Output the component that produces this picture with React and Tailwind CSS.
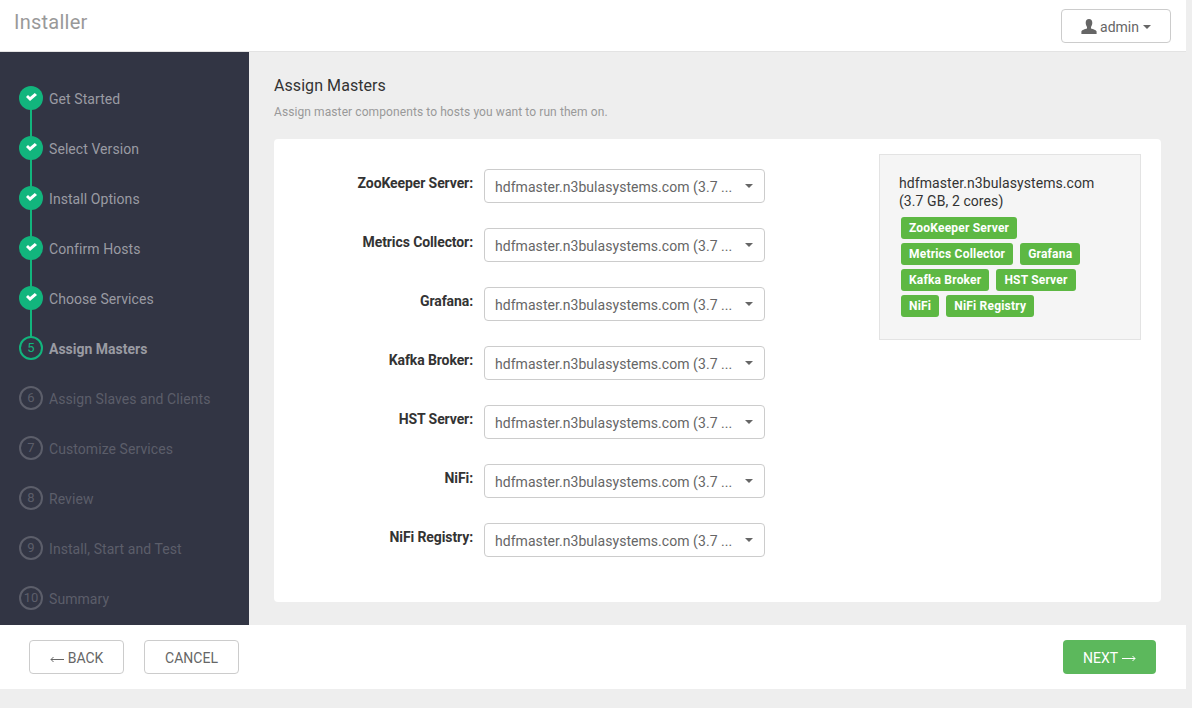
import React from "react";

const steps = [
  "Get Started",
  "Select Version",
  "Install Options",
  "Confirm Hosts",
  "Choose Services",
  "Assign Masters",
  "Assign Slaves and Clients",
  "Customize Services",
  "Review",
  "Install, Start and Test",
  "Summary",
];

const masters = ["ZooKeeper Server", "Metrics Collector", "Grafana", "Kafka Broker", "HST Server", "NiFi", "NiFi Registry"];

const hostRows = [
  ["ZooKeeper Server"],
  ["Metrics Collector", "Grafana"],
  ["Kafka Broker", "HST Server"],
  ["NiFi", "NiFi Registry"],
];

const CURRENT = 5;

function Check() {
  return (
    <svg width="11" height="8" viewBox="0 0 11 8" className="mb-[2px]">
      <path d="M0 4 2 2 4 4 8.800 0 11 2 4 8z" fill="white" />
    </svg>
  );
}

function Arrow({ left, className }) {
  return (
    <svg width="14" height="7" viewBox="0 0 14 7" fill="none" stroke="currentColor" className={className}>
      {left ? <path d="M14 3.500H1M3.500 1 1 3.500 3.500 6" /> : <path d="M0 3.500h13M10.500 1 13 3.500 10.500 6" />}
    </svg>
  );
}

function Step({ index, label }) {
  const done = index < CURRENT;
  const current = index === CURRENT;
  return (
    <li className="relative flex h-[50px] items-start">
      {index < CURRENT && <span className="absolute left-[11px] top-[20px] h-[34px] w-[2px] bg-[#12b57d]" />}
      {done ? (
        <span className="relative flex h-6 w-6 shrink-0 items-center justify-center rounded-full bg-[#12b57d]">
          <Check />
        </span>
      ) : (
        <span
          className={
            current
              ? "relative flex h-6 w-6 shrink-0 items-center justify-center rounded-full border-2 border-[#12b57d] bg-[#323544] text-[13px] text-[#12b57d]"
              : "relative flex h-6 w-6 shrink-0 items-center justify-center rounded-full border-2 border-[#5c5e6a] text-[13px] text-[#5c5e6a]"
          }
        >
          {index}
        </span>
      )}
      <span
        className={
          current
            ? "mt-px ml-[6px] text-sm leading-6 font-bold text-[#9a9ba3]"
            : done
              ? "mt-px ml-[6px] text-sm leading-6 tracking-[0.07px] text-[#9a9ba3]"
              : "mt-px ml-[6px] text-sm leading-6 tracking-[0.07px] text-[#5c5e6a]"
        }
      >
        {label}
      </span>
    </li>
  );
}

function MasterRow({ label }) {
  return (
    <div className="flex h-[59px] items-start">
      <label className="mt-[4px] w-[199px] text-right text-sm leading-5 font-bold tracking-[-0.1px] text-[#333]">{label}:</label>
      <div className="ml-[11px] flex h-[34px] w-[281px] items-center justify-between rounded border border-[#ccc] bg-white pr-[11px] pl-[10px] text-sm text-[#666]">
        <span className="mt-[2px] tracking-[0.05px]">hdfmaster.n3bulasystems.com (3.7 ...</span>
        <span className="h-0 w-0 border-x-4 border-t-4 border-x-transparent border-t-[#666]" />
      </div>
    </div>
  );
}

export default function App() {
  return (
    <div className="h-[708px] w-[1192px] overflow-hidden bg-[#eeeeee] font-['Roboto',sans-serif] text-sm">
      <div className="w-[1186px]">
        <header className="flex h-[52px] items-start justify-between border-b border-[#e3e3e3] bg-white pr-[15px] pl-[14px]">
          <h1 className="mt-[9px] text-xl leading-[26px] tracking-[0.25px] text-[#999]">Installer</h1>
          <button className="mt-[9px] flex h-[34px] w-[110px] items-center justify-center rounded border border-[#ccc] bg-white text-sm text-[#666]">
            <svg width="16" height="15" viewBox="0 0 16 15" className="mr-[3px]" fill="#666">
              <path d="M8 0c2.200 0 3.300 1.600 3.300 3.800 0 1.700-.6 3.200-1.300 4.100v1.500c1.900.6 5.300 1.500 5.600 3V15H.4v-2.600c.3-1.500 3.700-2.400 5.600-3V7.900C5.300 7 4.700 5.500 4.700 3.800 4.700 1.600 5.800 0 8 0z" />
            </svg>
            <span className="mt-[2px]">admin</span>
            <span className="mt-[2px] ml-[4px] h-0 w-0 border-x-4 border-t-4 border-x-transparent border-t-[#666]" />
          </button>
        </header>

        <div className="flex h-[573px]">
          <nav className="w-[249px] shrink-0 bg-[#323544] pt-[34px] pl-[19px]">
            <ol>
              {steps.map((s, i) => (
                <Step key={s} index={i} label={s} />
              ))}
            </ol>
          </nav>

          <main className="flex-1 px-[25px] pt-[24px]">
            <h2 className="text-base leading-5 tracking-[0.07px] text-[#333]">Assign Masters</h2>
            <p className="mt-[8px] text-xs leading-4 tracking-[0.09px] text-[#999]">Assign master components to hosts you want to run them on.</p>
            <section className="mt-[19px] flex h-[463px] justify-between rounded bg-white pt-[15px] pr-5">
              <div className="pt-[15px]">
                {masters.map((m) => (
                  <MasterRow key={m} label={m} />
                ))}
              </div>
              <aside className="h-[186px] w-[262px] border border-[#e3e3e3] bg-[#f5f5f5] pt-[19px] pl-[19px]">
                <div className="text-sm leading-[18px] tracking-[0.08px] text-[#333]">
                  hdfmaster.n3bulasystems.com
                  <br />
                  (3.7 GB, 2 cores)
                </div>
                <div className="mt-[7px]">
                  {hostRows.map((row) => (
                    <div key={row[0]} className="mb-[4px] flex h-[22px] gap-[7px] pl-[2px]">
                      {row.map((m) => (
                        <span key={m} className="rounded-[3px] bg-[#5db843] px-[8px] text-xs leading-[22px] font-bold tracking-[0.2px] text-white">
                          {m}
                        </span>
                      ))}
                    </div>
                  ))}
                </div>
              </aside>
            </section>
          </main>
        </div>

        <footer className="flex h-[64px] items-start justify-between bg-white pt-[15px] pr-[30px] pl-[29px]">
          <div className="flex gap-5">
            <button className="flex h-[34px] w-[95px] items-center justify-center gap-[4px] rounded border border-[#ccc] bg-white pt-[2px] text-sm text-[#666]">
              <Arrow left className="mt-[2px]" />
              BACK
            </button>
            <button className="h-[34px] w-[95px] rounded border border-[#ccc] bg-white pt-[2px] text-sm text-[#666]">CANCEL</button>
          </div>
          <button className="flex h-[34px] w-[93px] items-center justify-center gap-[4px] rounded bg-[#5cb85c] pt-[2px] text-sm text-white">
            NEXT
            <Arrow />
          </button>
        </footer>
      </div>
    </div>
  );
}
